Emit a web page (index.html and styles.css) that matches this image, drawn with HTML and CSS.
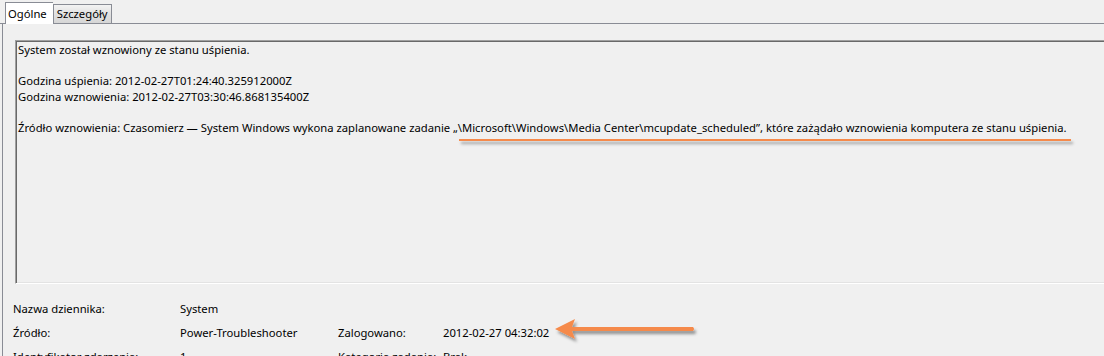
FILE: index.html
```html
<!DOCTYPE html>
<html lang="pl">
<head>
    <meta charset="UTF-8">
    <title>Właściwości zdarzenia</title>
    <link rel="stylesheet" href="styles.css">
</head>
<body>
    <div class="tabs">
        <div class="tab active">Ogólne</div>
        <div class="tab">Szczegóły</div>
    </div>

    <div class="page">
        <div class="desc">
            <p>System został wznowiony ze stanu uśpienia.</p>
            <p>Godzina uśpienia: 2012-02-27T01:24:40.325912000Z<br>Godzina wznowienia: 2012-02-27T03:30:46.868135400Z</p>
            <p>Źródło wznowienia: Czasomierz — System Windows wykona zaplanowane zadanie <span class="mark">„\Microsoft\Windows\Media Center\mcupdate_scheduled”, które zażądało wznowienia komputera ze stanu uśpienia.</span></p>
        </div>

        <div class="fields">
            <div>Nazwa dziennika:</div>
            <div>System</div>
            <div></div>
            <div></div>

            <div>Źródło:</div>
            <div>Power-Troubleshooter</div>
            <div>Zalogowano:</div>
            <div class="pointed">2012-02-27 04:32:02
                <svg class="arrow" width="150" height="30" viewBox="0 0 150 30">
                    <defs>
                        <filter id="shadow" x="-10%" y="-30%" width="130%" height="180%">
                            <feDropShadow dx="2" dy="3" stdDeviation="1.5" flood-color="#000" flood-opacity="0.4"/>
                        </filter>
                    </defs>
                    <g filter="url(#shadow)" fill="#f58a4b">
                        <path d="M2 13 L22 3 L19 11 L140 11 Q142 13 140 15 L19 15 L22 23 Z"/>
                    </g>
                </svg>
            </div>

            <div>Identyfikator zdarzenia:</div>
            <div>1</div>
            <div>Kategoria zadania:</div>
            <div>Brak</div>
        </div>
    </div>
</body>
</html>
```

FILE: styles.css
```css
html {
    overflow: hidden;
}
body {
    margin: 0;
    background-color: #f0f0f0;
    font-family: "Noto Sans", "Open Sans", sans-serif;
    font-size: 11.25px;
    color: #000;
}
.tabs {
    display: flex;
    align-items: flex-end;
    height: 23px;
    padding-left: 5px;
    border-bottom: 1px solid #898c95;
}
.tab {
    height: 19px;
    line-height: 18px;
    padding: 0 3px;
    border: 1px solid #898c95;
    border-bottom: none;
    background: linear-gradient(#f3f3f3, #e1e1e1 50%, #d6d6d6);
    box-sizing: border-box;
}
.tab.active {
    height: 22px;
    line-height: 21px;
    padding: 0 6px 0 2px;
    margin-bottom: -1px;
    background: #fff;
    border-right: none;
}
.page {
    margin-left: 2px;
    border-left: 1px solid #898c95;
    padding: 16px 0 0 12px;
    height: 320px;
}
.desc {
    height: 241px;
    margin-right: -20px;
    padding: 1px 0 0 2px;
    border-top: 1px solid #a0a0a0;
    border-left: 1px solid #a0a0a0;
    border-bottom: 1px solid #fff;
    box-shadow: inset 1px 1px 0 #696969, 0 -1px 0 #e3e3e3 inset;
    line-height: 15.5px;
}
.desc p {
    margin: 0 0 15.5px;
    white-space: nowrap;
}
.mark {
    position: relative;
}
.mark::after {
    content: "";
    position: absolute;
    left: 6px;
    right: -4px;
    bottom: -6px;
    height: 2px;
    background: #f58a4b;
    box-shadow: 2px 3px 3px rgba(0,0,0,0.35);
}
.fields {
    display: grid;
    grid-template-columns: 167px 158px 105px 1fr;
    grid-auto-rows: 24px;
    align-items: center;
    margin: 12px 0 0 -2px;
}
.pointed {
    position: relative;
}
.arrow {
    position: absolute;
    left: 110px;
    top: -9px;
}
```
